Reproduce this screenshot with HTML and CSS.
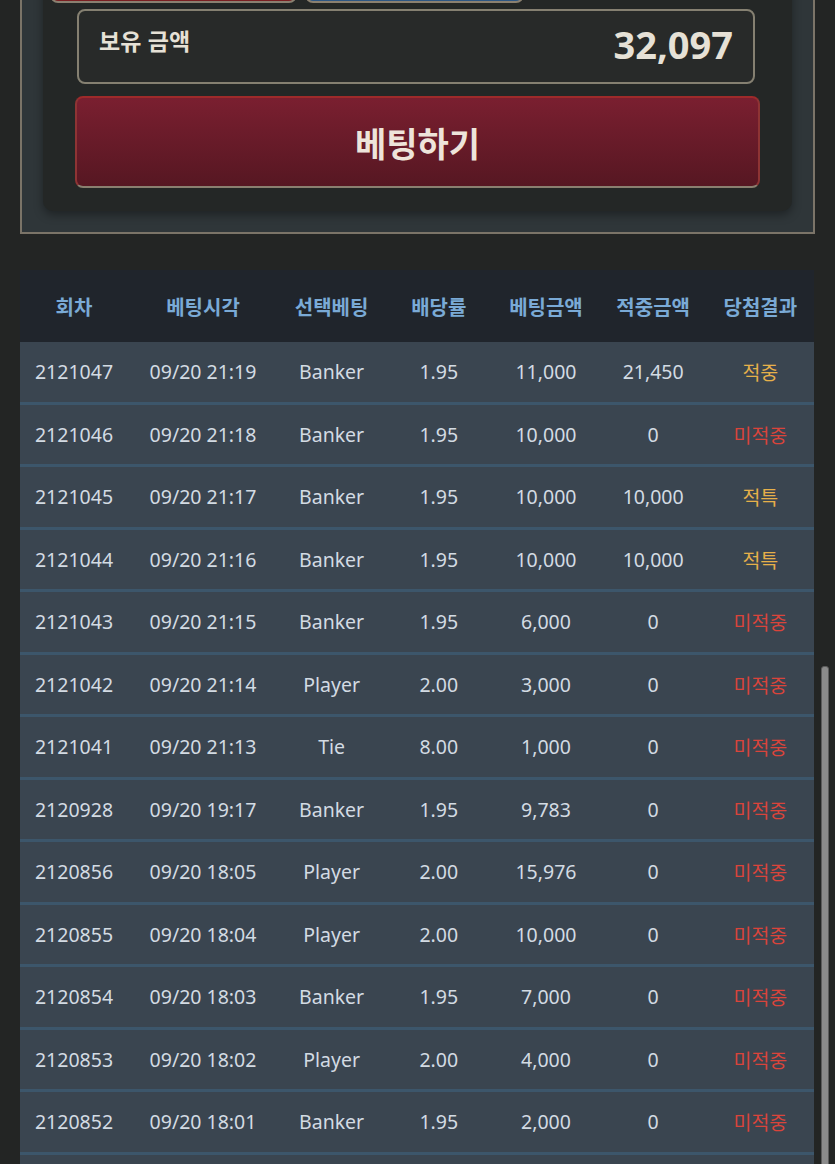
FILE: index.html
```html
<!DOCTYPE html>
<html lang="ko">
  <head>
    <meta charset="UTF-8" />
    <meta name="viewport" content="width=device-width, initial-scale=1.0" />
    <title>베팅 내역</title>
    <link rel="stylesheet" href="styles.css">
  </head>
  <body>
    <section class="bet-panel">
      <div class="bet-card">
        <div class="bet-types">
          <button class="type-btn banker" aria-label="Banker"></button>
          <button class="type-btn player" aria-label="Player"></button>
        </div>
        <div class="balance">
          <span class="balance-label">보유 금액</span>
          <span class="balance-value">32,097</span>
        </div>
        <button class="bet-btn">베팅하기</button>
      </div>
    </section>

    <table class="history">
      <thead>
        <tr>
          <th>회차</th>
          <th>베팅시각</th>
          <th>선택베팅</th>
          <th>배당률</th>
          <th>베팅금액</th>
          <th>적중금액</th>
          <th>당첨결과</th>
        </tr>
      </thead>
      <tbody>
        <tr><td>2121047</td><td>09/20 21:19</td><td>Banker</td><td>1.95</td><td>11,000</td><td>21,450</td><td class="win">적중</td></tr>
        <tr><td>2121046</td><td>09/20 21:18</td><td>Banker</td><td>1.95</td><td>10,000</td><td>0</td><td class="lose">미적중</td></tr>
        <tr><td>2121045</td><td>09/20 21:17</td><td>Banker</td><td>1.95</td><td>10,000</td><td>10,000</td><td class="win">적특</td></tr>
        <tr><td>2121044</td><td>09/20 21:16</td><td>Banker</td><td>1.95</td><td>10,000</td><td>10,000</td><td class="win">적특</td></tr>
        <tr><td>2121043</td><td>09/20 21:15</td><td>Banker</td><td>1.95</td><td>6,000</td><td>0</td><td class="lose">미적중</td></tr>
        <tr><td>2121042</td><td>09/20 21:14</td><td>Player</td><td>2.00</td><td>3,000</td><td>0</td><td class="lose">미적중</td></tr>
        <tr><td>2121041</td><td>09/20 21:13</td><td>Tie</td><td>8.00</td><td>1,000</td><td>0</td><td class="lose">미적중</td></tr>
        <tr><td>2120928</td><td>09/20 19:17</td><td>Banker</td><td>1.95</td><td>9,783</td><td>0</td><td class="lose">미적중</td></tr>
        <tr><td>2120856</td><td>09/20 18:05</td><td>Player</td><td>2.00</td><td>15,976</td><td>0</td><td class="lose">미적중</td></tr>
        <tr><td>2120855</td><td>09/20 18:04</td><td>Player</td><td>2.00</td><td>10,000</td><td>0</td><td class="lose">미적중</td></tr>
        <tr><td>2120854</td><td>09/20 18:03</td><td>Banker</td><td>1.95</td><td>7,000</td><td>0</td><td class="lose">미적중</td></tr>
        <tr><td>2120853</td><td>09/20 18:02</td><td>Player</td><td>2.00</td><td>4,000</td><td>0</td><td class="lose">미적중</td></tr>
        <tr><td>2120852</td><td>09/20 18:01</td><td>Banker</td><td>1.95</td><td>2,000</td><td>0</td><td class="lose">미적중</td></tr>
        <tr><td></td><td></td><td></td><td></td><td></td><td></td><td></td></tr>
      </tbody>
    </table>

    <div class="scroll-thumb"></div>
  </body>
</html>
```

FILE: styles.css
```css
html,
body {
  height: 100%;
  overflow: hidden;
}
body {
  margin: 0;
  padding: 0;
  background-color: #232524;
  font-family: "Noto Sans", "Noto Sans CJK KR", sans-serif;
  color: #d3dbe3;
}
.bet-panel {
  margin: -60px 20px 0;
  border: 2px solid #7b7468;
  background-color: #2f3639;
  padding: 0 21px 21px;
}
.bet-card {
  background-color: #242726;
  border-radius: 0 0 10px 10px;
  box-shadow: 0 4px 10px rgba(0, 0, 0, 0.35);
  padding: 11px 32px 23px;
}
.bet-types {
  display: flex;
  gap: 8px;
  margin-left: -25px;
  height: 50px;
}
.type-btn {
  height: 50px;
  border: 2px solid #8a8070;
  border-radius: 8px;
}
.type-btn.banker {
  width: 247px;
  background-color: #7a1f22;
}
.type-btn.player {
  width: 219px;
  background-color: #2d5683;
}
.balance {
  display: flex;
  justify-content: space-between;
  margin: 6px 5px 0 2px;
  height: 71px;
  border: 2px solid #858071;
  border-radius: 8px;
  background-color: #282a29;
  padding: 0 20px;
  color: #e6e1d6;
}
.balance-label {
  font-family: "Noto Sans CJK KR", sans-serif;
  font-size: 23px;
  font-weight: 700;
  margin-top: 14px;
  line-height: 30px;
}
.balance-value {
  font-size: 38px;
  font-weight: 700;
  line-height: 50px;
  margin-top: 8px;
}
.bet-btn {
  display: block;
  width: 100%;
  height: 92px;
  margin-top: 12px;
  border: 2px solid;
  border-color: #9e2a2a #8e3434 #8a8070;
  border-radius: 8px;
  background: linear-gradient(#7a1f30, #561722);
  color: #eee4da;
  font-family: "Noto Sans CJK KR", sans-serif;
  font-size: 34px;
  font-weight: 700;
}
.history {
  margin: 36px 21px 0 20px;
  width: 794px;
  border-collapse: collapse;
  table-layout: fixed;
}
.history th:nth-child(1) {
  width: 108px;
}
.history th:nth-child(2) {
  width: 150px;
}
.history th {
  height: 72px;
  padding: 0;
  background-color: #20252c;
  color: #7aaad6;
  font-family: "Noto Sans CJK KR", sans-serif;
  font-size: 20px;
  font-weight: 700;
}
.history td {
  height: 59.5px;
  padding: 0;
  text-align: center;
  background-color: #3a4550;
  border-bottom: 3px solid #3c566b;
  font-size: 19.5px;
  color: #d3dbe3;
}
.history td.win {
  color: #e6b04a;
  font-family: "Noto Sans CJK KR", sans-serif;
}
.history td.lose {
  color: #d9443b;
  font-family: "Noto Sans CJK KR", sans-serif;
}
.scroll-thumb {
  position: fixed;
  right: 6px;
  top: 666px;
  bottom: -10px;
  width: 6px;
  border-radius: 3px;
  background-color: #8b8b8b;
  border: 1px solid #5c5c5c;
}
```
